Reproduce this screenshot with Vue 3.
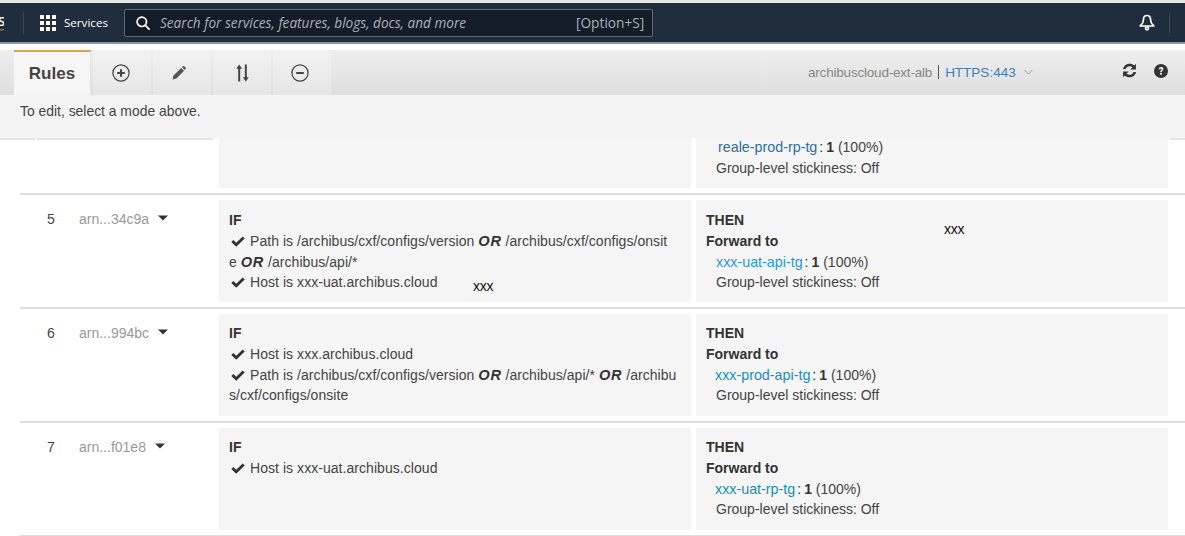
<script setup>
const rows = [
  {
    n: 5, arn: 'arn...34c9a', note: true,
    target: 'xxx-uat-api-tg', cls: 'link-a',
    lines: [
      { check: true, html: 'Path is /archibus/cxf/configs/version <b><i>OR</i></b> /archibus/cxf/configs/onsit' },
      { check: false, html: 'e <b><i>OR</i></b> /archibus/api/*' },
      { check: true, html: 'Host is <span class="x">xxx</span>-uat.archibus.cloud' }
    ]
  },
  {
    n: 6, arn: 'arn...994bc', note: false,
    target: 'xxx-prod-api-tg', cls: 'link-b',
    lines: [
      { check: true, html: 'Host is <span class="x">xxx</span>.archibus.cloud' },
      { check: true, html: 'Path is /archibus/cxf/configs/version <b><i>OR</i></b> /archibus/api/* <b><i>OR</i></b> /archibu' },
      { check: false, html: 's/cxf/configs/onsite' }
    ]
  },
  {
    n: 7, arn: 'arn...f01e8', note: false,
    target: 'xxx-uat-rp-tg', cls: 'link-b',
    lines: [
      { check: true, html: 'Host is <span class="x">xxx</span>-uat.archibus.cloud' }
    ]
  }
]
const tabs = ['plus', 'pencil', 'sort', 'minus']
</script>

<template>
  <div class="page">
    <header class="nav">
      <span class="logo">S<svg class="smile" width="7" height="3" viewBox="0 0 7 3"><path d="M0 0.5C2 2.5 4.5 2.5 6.5 0.8" fill="none" stroke="#e8963a" stroke-width="1"/></svg></span>
      <span class="nav-sep"></span>
      <svg class="grid-icon" width="16" height="16" viewBox="0 0 16 16" fill="#fff">
        <rect x="0" y="0" width="4" height="4"/><rect x="6" y="0" width="4" height="4"/><rect x="12" y="0" width="4" height="4"/>
        <rect x="0" y="6" width="4" height="4"/><rect x="6" y="6" width="4" height="4"/><rect x="12" y="6" width="4" height="4"/>
        <rect x="0" y="12" width="4" height="4"/><rect x="6" y="12" width="4" height="4"/><rect x="12" y="12" width="4" height="4"/>
      </svg>
      <span class="services">Services</span>
      <div class="search">
        <svg width="14" height="14" viewBox="0 0 14 14" fill="none" stroke="#fff" stroke-width="1.7">
          <circle cx="5.8" cy="5.8" r="4.7"/><path d="M9.2 9.2L13.3 13.3" stroke-linecap="round"/>
        </svg>
        <span class="placeholder">Search for services, features, blogs, docs, and more</span>
        <span class="shortcut">[Option+S]</span>
      </div>
      <svg class="bell" width="16" height="17" viewBox="0 0 16 17" fill="none" stroke="#fff" stroke-width="1.7" stroke-linejoin="round">
        <path d="M8 1.5C5.4 1.5 4.4 3.6 4.4 6C4.4 8.6 3 10.4 1.2 12H14.8C13 10.4 11.6 8.6 11.6 6C11.6 3.6 10.6 1.5 8 1.5Z"/>
        <circle cx="8" cy="14.3" r="1.5"/>
      </svg>
      <span class="nav-sep end"></span>
    </header>

    <div class="gap"></div>

    <div class="toolbar">
      <div class="tab active">Rules</div>
      <div v-for="t in tabs" :key="t" class="tab" :class="'tab-' + t">
        <svg v-if="t === 'plus'" width="18" height="18" viewBox="0 0 18 18" fill="none" stroke="#444">
          <circle cx="9" cy="9" r="8.1" stroke-width="1.2"/><path d="M5.2 9H12.8M9 5.2V12.8" stroke-width="2"/>
        </svg>
        <svg v-else-if="t === 'pencil'" width="14" height="14" viewBox="0 0 14 14" fill="#555">
          <path d="M0.5 13.5L1.5 9.6L9.2 1.9L12.1 4.8L4.4 12.5Z"/><path d="M10 1.1L11 0.3C11.4 0 11.9 0 12.2 0.3L13.7 1.8C14 2.1 14 2.6 13.7 3L12.9 4Z"/>
        </svg>
        <svg v-else-if="t === 'sort'" width="13" height="18" viewBox="0 0 13 18" fill="#444">
          <path d="M3.2 0.5L6.2 4.7H4.2V17.5H2.2V4.7H0.2Z"/><path d="M9.8 17.5L6.8 13.3H8.8V0.5H10.8V13.3H12.8Z"/>
        </svg>
        <svg v-else width="18" height="18" viewBox="0 0 18 18" fill="none" stroke="#444">
          <circle cx="9" cy="9" r="8.1" stroke-width="1.2"/><path d="M5.2 9H12.8" stroke-width="2"/>
        </svg>
      </div>
      <div class="toolbar-right">
        <span class="lb">archibuscloud-ext-alb</span>
        <span class="pipe"></span>
        <span class="listener">HTTPS:443</span>
        <svg class="chev" width="9" height="6" viewBox="0 0 9 6" fill="none" stroke="#7a9dbb" stroke-width="1"><path d="M0.5 1L4.5 5L8.5 1"/></svg>
        <svg class="refresh" width="15" height="15" viewBox="0 0 14 14" fill="#333">
          <path d="M13 0.8V6H7.8L9.8 4C9 3.3 8.1 3 7 3C5.3 3 3.9 4 3.3 5.7H0.9C1.6 2.6 4.1 0.6 7 0.6C8.8 0.6 10.3 1.2 11.5 2.3Z"/>
          <path d="M1 13.2V8H6.2L4.2 10C5 10.7 5.9 11 7 11C8.7 11 10.1 10 10.7 8.3H13.1C12.4 11.4 9.9 13.4 7 13.4C5.2 13.4 3.7 12.8 2.5 11.7Z"/>
        </svg>
        <svg class="help" width="14" height="14" viewBox="0 0 14 14">
          <circle cx="7" cy="7" r="7" fill="#333"/>
          <path d="M4.7 5.3C4.8 3.9 5.8 3.1 7.1 3.1C8.5 3.1 9.4 4 9.4 5.1C9.4 6.6 7.7 6.6 7.7 8.2H6.2C6.2 6.1 7.7 6.1 7.7 5.2C7.7 4.7 7.4 4.4 7 4.4C6.5 4.4 6.2 4.8 6.2 5.3Z" fill="#fff"/>
          <rect x="6.1" y="9" width="1.7" height="1.7" fill="#fff"/>
        </svg>
      </div>
    </div>

    <div class="hint">To edit, select a mode above.</div>

    <section class="table">
      <div class="row first">
        <div class="head-lines">
          <span class="hl a"></span><span class="hl b"></span>
        </div>
        <div class="cell if-cell"></div>
        <div class="cell then-cell">
          <div class="line target top-target"><a class="link link-top">reale-prod-rp-tg</a><span class="colon">:</span><b>1</b> <span class="pct">(100%)</span></div>
          <div class="line target">Group-level stickiness: Off</div>
        </div>
        <span class="hl c"></span>
      </div>

      <div v-for="r in rows" :key="r.n" class="row" :class="{ 'row-note': r.note }">
        <div class="meta">
          <span class="num">{{ r.n }}</span>
          <span class="arn">{{ r.arn }}</span>
          <svg class="caret" width="10" height="6" viewBox="0 0 10 6" fill="#333"><path d="M0 0.5H10L5 5.5Z"/></svg>
        </div>
        <div class="cell if-cell">
          <div class="line strong">IF</div>
          <div v-for="(l, i) in r.lines" :key="i" class="line cond">
            <svg v-if="l.check" class="check" width="14" height="11" viewBox="0 0 14 11" fill="#333"><path d="M0.3 5.9L2.3 3.9L5.2 6.8L11.7 0.4L13.7 2.4L5.2 10.8Z"/></svg>
            <span v-html="l.html"></span>
          </div>
          <span v-if="r.note" class="note note-if">xxx</span>
        </div>
        <div class="cell then-cell">
          <div class="line strong">THEN</div>
          <div class="line strong">Forward to</div>
          <div class="line target"><a class="link" :class="r.cls">{{ r.target }}</a><span class="colon">:</span><b>1</b> <span class="pct">(100%)</span></div>
          <div class="line target">Group-level stickiness: Off</div>
          <span v-if="r.note" class="note note-then">xxx</span>
        </div>
      </div>
    </section>
  </div>
</template>

<style scoped>
.page {
  width: 1185px;
  height: 536px;
  overflow: hidden;
  background: #fff;
  font-family: "Liberation Sans", Arial, sans-serif;
  font-size: 14px;
  color: #444;
  border-top: 3px solid #e6e6e4;
  box-sizing: border-box;
}
.nav {
  height: 39px;
  background: #202d3c;
  border-bottom: 2px solid #8b97a3;
  box-sizing: content-box;
  display: flex;
  align-items: center;
  color: #fff;
}
.logo {
  width: 6px;
  overflow: hidden;
  font-family: "Open Sans", sans-serif;
  font-size: 13px;
  font-weight: 600;
  margin-left: -2px;
  margin-right: 1px;
  position: relative;
  height: 20px;
  line-height: 17px;
}
.smile { position: absolute; left: 0; top: 15px; }
.nav-sep { width: 1px; height: 22px; background: #3a4756; margin-left: 18px; }
.nav-sep.end { margin-left: 14px; height: 20px; }
.grid-icon { margin-left: 16px; }
.services {
  margin-left: 8px;
  font-family: "Open Sans", sans-serif;
  font-size: 11.6px;
  font-weight: 500;
  width: 60px;
}
.search {
  width: 529px;
  height: 28px;
  box-sizing: border-box;
  background: #141c28;
  border: 1px solid #5d6976;
  border-radius: 2px;
  display: flex;
  align-items: center;
  padding-left: 11px;
}
.placeholder {
  margin-left: 10px;
  font-family: "Open Sans", sans-serif;
  font-style: italic;
  font-size: 13.6px;
  color: #aab0b6;
  width: 416px;
  white-space: nowrap;
}
.shortcut {
  font-family: "Open Sans", sans-serif;
  font-size: 13.7px;
  color: #aab0b6;
  white-space: nowrap;
}
.bell { margin-left: 486px; }

.gap { height: 6px; background: #fff; }

.toolbar {
  height: 45px;
  background: linear-gradient(#efefef, #dedede);
  display: flex;
  padding-left: 14px;
  align-items: stretch;
}
.tab {
  width: 58px;
  margin-left: 2px;
  display: flex;
  align-items: center;
  justify-content: center;
  background: linear-gradient(#f2f2f2, #e6e6e6);
  box-sizing: border-box;
}
.tab-plus { padding-right: 2px; }
.tab-pencil { padding-right: 6px; }
.tab-minus { padding-right: 4px; }
.tab.active {
  width: 77px;
  margin-left: 0;
  border-top: 2px solid #e3a04a;
  border-right: 1px solid #e4e4e4;
  background: #f6f6f6;
  font-size: 17px;
  font-weight: 700;
  color: #444;
}
.toolbar-right {
  flex: 1;
  display: flex;
  align-items: center;
  padding-bottom: 1px;
  padding-left: 477px;
}
.lb { color: #888; font-size: 13.5px; letter-spacing: -0.2px; }
.pipe { width: 1px; height: 14px; background: #555; margin: 0 7px 0 6px; }
.listener { color: #3e7fb4; font-size: 13.5px; margin-left: -1px; }
.chev { margin-left: 8px; }
.refresh { margin-left: 89px; margin-top: -3px; }
.help { margin-left: 17px; margin-top: -3px; }

.hint {
  height: 43px;
  background: #f4f4f4;
  padding: 7px 0 0 20px;
  box-sizing: border-box;
  line-height: 18px;
  font-size: 13.9px;
  color: #444;
}

.table { display: block; }
.row {
  height: 114px;
  margin-left: 20px;
  border-bottom: 2px solid #dedede;
  box-sizing: border-box;
  display: grid;
  grid-template-columns: 194px 472px 472px;
  column-gap: 5px;
  padding-top: 5px;
  position: relative;
}
.row.first {
  height: 57px;
  padding-top: 0;
}
.head-lines { position: relative; }
.hl { position: absolute; height: 2px; background: #e4e4e4; top: 0; }
.hl.a { left: -20px; width: 35px; }
.hl.b { left: 17px; width: 176px; }
.hl.c { left: 1150px; width: 15px; }
.row.first .cell {
  height: 50px;
  padding: 0 10px 9px;
  display: flex;
  flex-direction: column;
  justify-content: flex-end;
}
.meta {
  display: flex;
  align-items: flex-start;
  padding-top: 9px;
  line-height: 20px;
}
.num { margin-left: 27px; width: 32px; color: #444; }
.arn { color: #999; white-space: nowrap; }
.caret { margin: 6px 0 0 9px; }
.cell {
  background: #f5f5f5;
  height: 102px;
  padding: 9px 10px 0;
  box-sizing: border-box;
  position: relative;
  white-space: nowrap;
}
.row-note .cell { padding-top: 10px; }
.line { line-height: 20.8px; height: 20.8px; color: #444; }
.cond { letter-spacing: 0.05px; }
.cond :deep(b) { font-size: 14.6px; letter-spacing: 0.7px; color: #333; }
.line b { color: #333; }
.strong { font-weight: 700; color: #333; }
.target { padding-left: 10px; }
.top-target { padding-left: 12px; }
.check { margin: 0 5px 0 2px; vertical-align: -1px; }
.link { font-size: 14.3px; text-decoration: none; }
.link-top { color: #2b6f9f; }
.link-a { color: #1f9bd1; }
.link-b { color: #1590b8; margin-left: -1px; }
.colon { margin: 0 3px 0 2px; color: #333; }
.note {
  position: absolute;
  font-size: 14px;
  letter-spacing: -0.3px;
  color: #111;
  line-height: 15px;
}
.note-if { left: 254px; top: 79px; }
.note-then { left: 248px; top: 22px; }
</style>
